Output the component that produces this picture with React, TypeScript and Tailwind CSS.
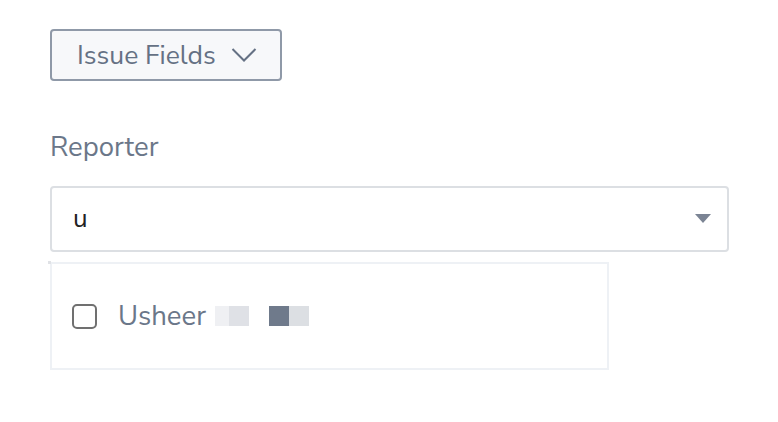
import React from 'react';

export default function App() {
  return (
    <div
      className="w-[778px] h-[422px] bg-white pl-[50px] pt-[29px]"
      style={{ fontFamily: '"Nunito Sans", Lato, "Noto Sans", sans-serif' }}
    >
      <button className="flex h-[52px] w-[232px] items-center rounded-[4px] border-2 border-[#8f99a8] bg-[#f7f8fa] pl-[25px] text-[26.5px] leading-[30px] text-[#657184]">
        <span>Issue Fields</span>
        <svg className="ml-[15px]" width="26" height="16" viewBox="0 0 26 16" fill="none">
          <path d="M1.5 2 L13 13.5 L24.5 2" stroke="#657184" strokeWidth="2" />
        </svg>
      </button>

      <div className="mt-[49px] text-[27.5px] leading-[34px] text-[#6b7789]">Reporter</div>

      <div className="mt-[22px] flex h-[66px] w-[679px] items-center justify-between rounded-[4px] border-2 border-[#dcdfe3] pl-[21px] pr-[16px]">
        <span className="text-[26px] leading-[30px] text-[#222]">u</span>
        <svg width="16" height="10" viewBox="0 0 16 10">
          <path d="M0 0 H16 L8 9 Z" fill="#7b8494" />
        </svg>
      </div>

      <div className="relative mt-[10px] flex h-[108px] w-[559px] items-center border-2 border-[#eef1f5] pl-[20px]">
        <div className="absolute left-[-4px] top-[-3px] h-[3px] w-[3px] bg-[#e0e2e6]" />
        <span className="h-[25px] w-[25px] rounded-[5px] border-2 border-[#707070]" />
        <span className="ml-[21px] text-[27.5px] leading-[30px] text-[#6b7789]">Usheer</span>
        <span className="ml-[9px] flex">
          <span className="h-[20px] w-[14px] bg-[#eff0f3]" />
          <span className="h-[20px] w-[20px] bg-[#dfe1e6]" />
          <span className="ml-[20px] h-[20px] w-[20px] bg-[#6f7a8b]" />
          <span className="h-[20px] w-[20px] bg-[#dcdfe3]" />
        </span>
      </div>
    </div>
  );
}
